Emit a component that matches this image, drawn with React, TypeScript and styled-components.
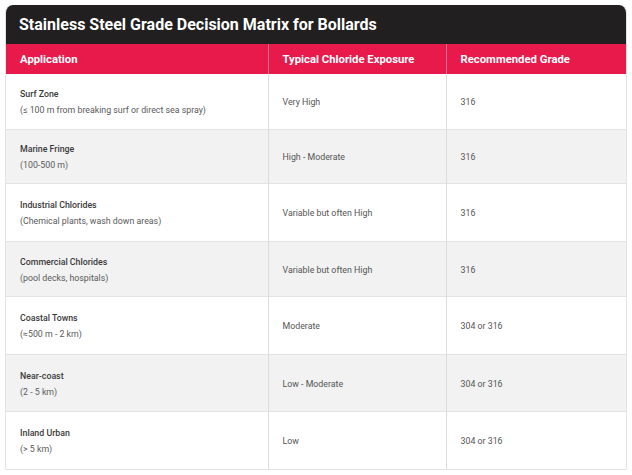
import React from "react";
import styled, { createGlobalStyle } from "styled-components";

const Global = createGlobalStyle`
  html, body { margin: 0; padding: 0; background: #ffffff; }
  body { font-family: Roboto, "Liberation Sans", Arial, sans-serif; }
`;

const Page = styled.div`
  padding: 5px;
  width: 622px;
`;

const Card = styled.div`
  width: 622px;
  border: 1px solid #e2e2e2;
  border-top: none;
  border-radius: 8px 8px 0 0;
  box-sizing: border-box;
  overflow: hidden;
`;

const TitleBar = styled.div`
  height: 39px;
  background: #221f20;
  color: #ffffff;
  display: flex;
  align-items: center;
  padding: 0 14px;
  font-size: 16px;
  font-weight: 700;
  box-sizing: border-box;
  margin: 0 -1px;
`;

const Table = styled.table`
  width: 100%;
  border-collapse: collapse;
  table-layout: fixed;
`;

const HeadCell = styled.th`
  height: 30px;
  background: #e8194b;
  color: #ffffff;
  text-align: left;
  font-size: 11.3px;
  font-weight: 700;
  padding: 0 14px;
  border-right: 1px solid rgba(255, 255, 255, 0.35);
  box-sizing: border-box;
  &:last-child { border-right: none; }
`;

const Row = styled.tr<{ $striped: boolean; $h: number }>`
  background: ${(p) => (p.$striped ? "#f2f2f2" : "#ffffff")};
  height: ${(p) => p.$h}px;
  border-top: 1px solid #e3e3e3;
  &:first-child { border-top: none; }
`;

const Cell = styled.td`
  padding: 2px 14px 0;
  vertical-align: middle;
  font-size: 8.8px;
  color: #555555;
  line-height: 16px;
  border-right: 1px solid #dcdcdc;
  &:last-child { border-right: none; }
`;

const Name = styled.div`
  color: #3a3a3a;
  font-weight: 500;
`;

const Note = styled.div`
  color: #5a5a5a;
`;

type Item = { name: string; note: string; exposure: string; grade: string; h: number };

const rows: Item[] = [
  { name: "Surf Zone", note: "(≤ 100 m from breaking surf or direct sea spray)", exposure: "Very High", grade: "316", h: 55 },
  { name: "Marine Fringe", note: "(100-500 m)", exposure: "High - Moderate", grade: "316", h: 54 },
  { name: "Industrial Chlorides", note: "(Chemical plants, wash down areas)", exposure: "Variable but often High", grade: "316", h: 58 },
  { name: "Commercial Chlorides", note: "(pool decks, hospitals)", exposure: "Variable but often High", grade: "316", h: 55 },
  { name: "Coastal Towns", note: "(≈500 m - 2 km)", exposure: "Moderate", grade: "304 or 316", h: 58 },
  { name: "Near-coast", note: "(2 - 5 km)", exposure: "Low - Moderate", grade: "304 or 316", h: 57 },
  { name: "Inland Urban", note: "(> 5 km)", exposure: "Low", grade: "304 or 316", h: 58 },
];

export default function App() {
  return (
    <>
      <Global />
      <Page>
        <Card>
          <TitleBar>Stainless Steel Grade Decision Matrix for Bollards</TitleBar>
          <Table>
            <colgroup>
              <col style={{ width: 262 }} />
              <col style={{ width: 178 }} />
              <col />
            </colgroup>
            <thead>
              <tr>
                <HeadCell>Application</HeadCell>
                <HeadCell>Typical Chloride Exposure</HeadCell>
                <HeadCell>Recommended Grade</HeadCell>
              </tr>
            </thead>
            <tbody>
              {rows.map((r, i) => (
                <Row key={r.name} $striped={i % 2 === 1} $h={r.h}>
                  <Cell>
                    <Name>{r.name}</Name>
                    <Note>{r.note}</Note>
                  </Cell>
                  <Cell>{r.exposure}</Cell>
                  <Cell>{r.grade}</Cell>
                </Row>
              ))}
            </tbody>
          </Table>
        </Card>
      </Page>
    </>
  );
}
